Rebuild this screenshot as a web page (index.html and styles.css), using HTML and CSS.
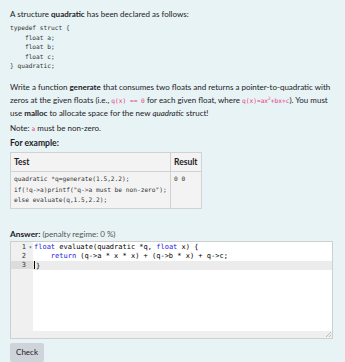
FILE: index.html
```html
<!DOCTYPE html>
<html lang="en">

<head>
    <meta charset="utf-8">
    <title>Question</title>
    <link rel="stylesheet" href="styles.css">
</head>

<body>
    <main class="que">
        <div class="qtext">
            <p>A structure <b>quadratic</b> has been declared as follows:</p>
<pre class="decl">typedef struct {
    float a;
    float b;
    float c;
} quadratic;</pre>
            <p class="gap">Write a function <b>generate</b> that consumes two floats and returns a pointer-to-quadratic with zeros at the given floats (i.e., <code>q(x) == 0</code> for each given float, where <code>q(x)=ax<sup>2</sup>+bx+c</code>). You must use <b>malloc</b> to allocate space for the new <i>quadratic</i> struct!</p>
            <p>Note: <code>a</code> must be non-zero.</p>
            <h4>For example:</h4>
            <table class="examples">
                <thead>
                    <tr>
                        <th class="col_test">Test</th>
                        <th class="col_result">Result</th>
                    </tr>
                </thead>
                <tbody>
                    <tr>
<td><pre>quadratic *q=generate(1.5,2.2);
if(!q->a)printf("q->a must be non-zero");
else evaluate(q,1.5,2.2);</pre></td>
<td><pre>0 0</pre></td>
                    </tr>
                </tbody>
            </table>
        </div>

        <div class="answer_label"><b>Answer:</b> <span>(penalty regime: 0 %)</span></div>

        <div class="editor">
            <div class="editor_body">
                <div class="gutter">
                    <div class="gl">1<span class="fold">▾</span></div>
                    <div class="gl">2</div>
                    <div class="gl active">3</div>
                </div>
                <div class="lines">
                    <div class="ln"><span class="kw">float</span> evaluate(quadratic *q, <span class="kw">float</span> x) {</div>
                    <div class="ln">    <span class="kw">return</span> (q->a * x * x) + (q->b * x) + q->c;</div>
                    <div class="ln active"><span class="cursor"></span>}</div>
                </div>
            </div>
            <div class="editor_foot"></div>
            <span class="grip"></span>
        </div>

        <button class="check">Check</button>
    </main>
</body>

</html>
```

FILE: styles.css
```css
* {
    box-sizing: border-box;
}

body {
    margin: 0;
    background: #e7f3f5;
    color: #1d2125;
    font-family: 'Lato', 'Noto Sans', sans-serif;
    font-size: 8px;
    line-height: 13px;
}

.que {
    padding: 7.5px 12px 0 10px;
}

.qtext {
    margin-right: -8px;
}

.qtext p {
    margin: 0 0 2px;
}

.qtext .gap {
    margin-top: 10px;
}

pre {
    font-family: 'DejaVu Sans Mono', monospace;
    font-size: 6.2px;
    line-height: 9.5px;
    margin: 0;
}

.decl {
    margin: 2.75px 0 0;
    color: #333;
}

code {
    font-family: 'DejaVu Sans Mono', monospace;
    font-size: 6.2px;
    color: #e83e8c;
}

sup {
    font-size: 4.5px;
    line-height: 0;
}

h4 {
    font-size: 8.6px;
    line-height: 13px;
    margin: 0 0 2.5px;
}

.examples {
    border-collapse: collapse;
    background: #f3f3f3;
    margin-bottom: 18.5px;
}

.examples th,
.examples td {
    border: 1px solid #d2d2d2;
    text-align: left;
    vertical-align: top;
}

.examples th {
    font-size: 8.5px;
    line-height: 17px;
    padding: 1px 3px 0;
}

.examples td {
    padding: 2px 3px 3px;
}

.examples pre {
    line-height: 10.3px;
    color: #333;
}

.col_test {
    width: 160px;
}

.answer_label b {
    font-size: 8.3px;
}

.answer_label span {
    color: #555;
    font-size: 8px;
}

.editor {
    position: relative;
    border: 1px solid #cfcfcf;
    background: white;
    height: 98px;
    display: flex;
    flex-direction: column;
}

.editor_body {
    flex: 1;
    display: flex;
    font-family: 'DejaVu Sans Mono', monospace;
    font-size: 7px;
    line-height: 8.7px;
}

.gutter {
    width: 22px;
    background: #f0f0f0;
    color: #333;
    text-align: right;
    padding-top: 1.5px;
}

.gl {
    padding-right: 7px;
    position: relative;
}

.gl.active {
    background: #dcdcdc;
}

.fold {
    position: absolute;
    right: 1px;
    top: 0;
    font-size: 5.5px;
    color: #666;
}

.lines {
    flex: 1;
    padding-top: 1.5px;
    color: #000;
}

.ln {
    padding-left: 1px;
    white-space: pre;
}

.ln.active {
    background: #ececec;
}

.kw {
    color: #2323e0;
}

.cursor {
    display: inline-block;
    width: 1px;
    height: 8px;
    background: #000;
    vertical-align: -1.5px;
    margin-right: 1px;
}

.editor_foot {
    height: 7px;
    background: #efefef;
}

.grip {
    position: absolute;
    right: 1px;
    bottom: 1px;
    width: 5px;
    height: 5px;
    background: linear-gradient(135deg, transparent 50%, #bbb 50%, #bbb 60%, transparent 60%, transparent 75%, #bbb 75%, #bbb 85%, transparent 85%);
}

.check {
    display: block;
    margin-top: 4px;
    font-family: 'Lato', sans-serif;
    font-size: 8px;
    color: #1d2125;
    background: #ced4da;
    border: none;
    border-radius: 2px;
    width: 34px;
    height: 19px;
    padding: 0;
}
```
